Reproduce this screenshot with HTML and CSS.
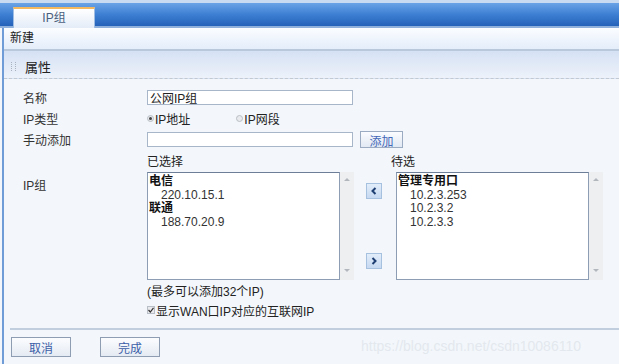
FILE: index.html
```html
<!DOCTYPE html>
<html lang="zh-CN">
<head>
    <meta charset="UTF-8">
    <meta name="viewport" content="width=device-width, initial-scale=1.0">
    <title>IP组</title>
    <link rel="stylesheet" href="styles.css">
</head>
<body>
    <div class="topbar">
        <div class="tab">IP组</div>
    </div>
    <div class="page">
        <div class="toolbar">新建</div>
        <div class="section-head">
            <span class="grip"></span>
            <span>属性</span>
        </div>
        <div class="form">
            <div class="row">
                <label class="label">名称</label>
                <input class="text-input" type="text" value="公网IP组">
            </div>
            <div class="row">
                <label class="label">IP类型</label>
                <span class="radio checked"></span><span class="radio-text">IP地址</span>
                <span class="radio second"></span><span class="radio-text">IP网段</span>
            </div>
            <div class="row">
                <label class="label">手动添加</label>
                <input class="text-input" type="text">
                <button class="small-btn">添加</button>
            </div>
            <div class="row">
                <span class="label"></span>
                <span class="caption-left">已选择</span>
                <span class="caption-right">待选</span>
            </div>
            <div class="row lists-row">
                <label class="label">IP组</label>
                <div class="listbox">
                    <div class="list">
                        <div class="group">电信</div>
                        <div class="item">220.10.15.1</div>
                        <div class="group">联通</div>
                        <div class="item">188.70.20.9</div>
                    </div>
                    <div class="scrollbar"><span class="up"></span><span class="down"></span></div>
                </div>
                <div class="movers">
                    <button class="move-btn">
                        <svg width="8" height="8" viewBox="0 0 8 8"><path d="M5.5 1 L2.5 4 L5.5 7" fill="none" stroke="#1f3f73" stroke-width="2"/></svg>
                    </button>
                    <button class="move-btn">
                        <svg width="8" height="8" viewBox="0 0 8 8"><path d="M2.5 1 L5.5 4 L2.5 7" fill="none" stroke="#1f3f73" stroke-width="2"/></svg>
                    </button>
                </div>
                <div class="listbox">
                    <div class="list">
                        <div class="group">管理专用口</div>
                        <div class="item">10.2.3.253</div>
                        <div class="item">10.2.3.2</div>
                        <div class="item">10.2.3.3</div>
                    </div>
                    <div class="scrollbar"><span class="up"></span><span class="down"></span></div>
                </div>
            </div>
            <div class="row note-row">
                <span class="label"></span>
                <span>(最多可以添加32个IP)</span>
            </div>
            <div class="row note-row">
                <span class="label"></span>
                <span class="checkbox">
                    <svg width="6" height="6" viewBox="0 0 6 6"><path d="M0.5 3 L2.3 5 L5.5 0.8" fill="none" stroke="#333" stroke-width="1.2"/></svg>
                </span>
                <span>显示WAN口IP对应的互联网IP</span>
            </div>
        </div>
        <div class="footer">
            <button class="btn">取消</button>
            <button class="btn">完成</button>
        </div>
        <div class="watermark">https://blog.csdn.net/csdn10086110</div>
    </div>
</body>
</html>
```

FILE: styles.css
```css
body {
    margin: 0;
    height: 364px;
    overflow: hidden;
    background-color: #f3f7fb;
    font-family: "Liberation Sans", "Noto Sans CJK SC", sans-serif;
    font-size: 12px;
    color: #222;
}
.topbar {
    height: 28px;
    box-sizing: border-box;
    padding-left: 13px;
    padding-top: 5px;
    border-top: 3px solid #c9dbf1;
    border-bottom: 2px solid #8eb0da;
    background: linear-gradient(#6aa3e6, #3d7fd3 50%, #2461b8);
    display: flex;
    align-items: flex-end;
}
.tab {
    width: 82px;
    height: 21px;
    box-sizing: border-box;
    border-top: 2px solid #f3b85e;
    border-left: 1px solid #9fbde2;
    border-right: 1px solid #9fbde2;
    background: linear-gradient(#ffffff, #e3ecf8);
    color: #4a5f7e;
    text-align: center;
    line-height: 19px;
    margin-bottom: -2px;
}
.page {
    position: relative;
    margin-left: 2px;
    border-left: 2px solid #6f9bd6;
    height: 336px;
}
.toolbar {
    height: 21px;
    line-height: 21px;
    padding-left: 6px;
    background: linear-gradient(#fbfdff, #e4edfa);
    border-bottom: 2px solid #b9c8da;
}
.section-head {
    height: 28px;
    display: flex;
    align-items: center;
    padding-left: 7px;
    padding-top: 3px;
    box-sizing: border-box;
    background: linear-gradient(#d5e1f4, #edf2fa);
    border-bottom: 1px dashed #c3c9d0;
    font-size: 13px;
}
.grip {
    width: 3px;
    height: 9px;
    margin-right: 9px;
    border-left: 1px dotted #a9b3bf;
    border-right: 1px dotted #a9b3bf;
}
.form {
    padding-top: 8px;
}
.row {
    display: flex;
    align-items: center;
    height: 21px;
}
.label {
    width: 124px;
    padding-left: 19px;
    flex-shrink: 0;
    color: #333;
}
.text-input {
    width: 206px;
    height: 15px;
    box-sizing: border-box;
    margin: 0;
    padding: 0 2px;
    border: 1px solid #a7b6c8;
    background: #fff;
    font: inherit;
    font-size: 12px;
    color: #222;
}
.radio {
    width: 7px;
    height: 7px;
    border-radius: 50%;
    border: 1px solid #b9bfc6;
    background: #e8eaed;
    box-sizing: border-box;
    margin-right: 1px;
    position: relative;
}
.radio.checked::after {
    content: "";
    position: absolute;
    left: 1px;
    top: 1px;
    width: 3px;
    height: 3px;
    border-radius: 50%;
    background: #444;
}
.radio.second {
    margin-left: 46px;
}
.radio-text {
    color: #222;
}
.small-btn {
    margin-left: 7px;
    width: 43px;
    height: 17px;
    padding: 0;
    border: 1px solid #9aabc2;
    background: linear-gradient(#fafcff, #e2e9f3);
    color: #4467b8;
    font: inherit;
}
.caption-left {
    width: 244px;
}
.lists-row {
    height: 108px;
    align-items: stretch;
    margin-top: 1px;
}
.lists-row .label {
    padding-top: 4px;
}
.listbox {
    display: flex;
    width: 207px;
}
.list {
    flex: 1;
    background: #fff;
    border: 1px solid #8d9db3;
    border-top-color: #6d7f98;
    padding: 2px 1px;
    line-height: 13.5px;
    color: #333;
}
.group {
    font-weight: bold;
    color: #111;
}
.item {
    padding-left: 12px;
}
.scrollbar {
    width: 14px;
    background: #eeeff1;
    display: flex;
    flex-direction: column;
    justify-content: space-between;
    align-items: center;
    padding: 6px 0 8px;
}
.up, .down {
    width: 0;
    height: 0;
    border-left: 3px solid transparent;
    border-right: 3px solid transparent;
}
.up {
    border-bottom: 3px solid #b2b7bd;
}
.down {
    border-top: 3px solid #b2b7bd;
}
.movers {
    width: 42px;
    display: flex;
    flex-direction: column;
    justify-content: space-between;
    padding: 11px 0 11px 12px;
    box-sizing: border-box;
}
.move-btn {
    width: 16px;
    height: 16px;
    padding: 0;
    border: 1px solid #a6c0e0;
    background: linear-gradient(#e2edfa, #c6d9f1);
    display: flex;
    align-items: center;
    justify-content: center;
}
.note-row {
    height: 20px;
}
.checkbox {
    width: 8px;
    height: 8px;
    box-sizing: border-box;
    border: 1px solid #b9bfc6;
    background: #e8eaed;
    display: flex;
    align-items: center;
    justify-content: center;
    margin-right: 1px;
}
.footer {
    margin-top: 8px;
    margin-left: 6px;
    border-top: 2px solid #c1cedd;
    padding: 7px 0 0 1px;
    display: flex;
    gap: 29px;
}
.btn {
    width: 60px;
    height: 20px;
    padding: 0;
    border: 1px solid #8e9db2;
    background: linear-gradient(#fbfcfe, #e5ebf3);
    color: #3b5ea8;
    font: inherit;
}
.watermark {
    position: absolute;
    left: 357px;
    bottom: 10px;
    font-size: 14px;
    color: #e3e8ee;
}
```
